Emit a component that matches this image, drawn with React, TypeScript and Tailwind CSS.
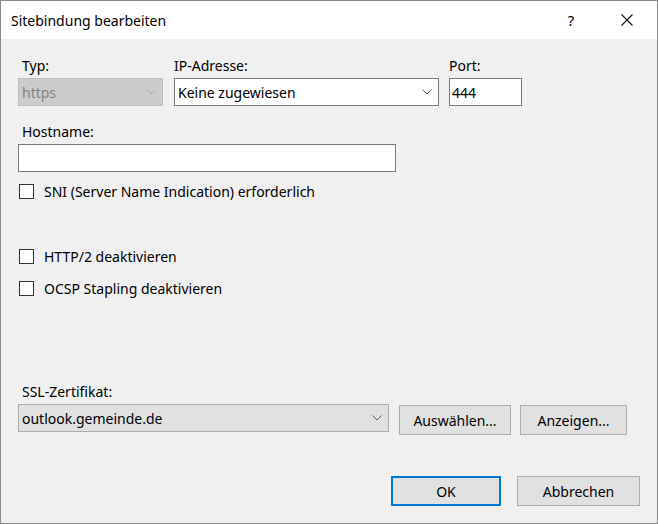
import React from "react";

const Chevron: React.FC<{ color?: string }> = ({ color = "#606060" }) => (
  <svg width="10" height="6" viewBox="0 0 10 6" fill="none">
    <path d="M0.5 0.5 L5 5 L9.5 0.5" stroke={color} strokeWidth="1" />
  </svg>
);

const Check: React.FC<{ label: string }> = ({ label }) => (
  <div className="flex items-center gap-[10px] pl-[1px]">
    <div className="w-[15px] h-[15px] border border-[#333333] bg-white" />
    <span>{label}</span>
  </div>
);

const App: React.FC = () => {
  return (
    <div
      className="w-[658px] h-[524px] flex flex-col bg-[#f0f0f0] border border-[#8a8a8a] text-[14px] text-black overflow-hidden"
      style={{ fontFamily: "'Noto Sans', 'Open Sans', sans-serif" }}
    >
      {/* Title bar */}
      <div className="h-[38px] shrink-0 bg-white flex items-center pl-[10px]">
        <span className="text-[14px] flex-1">Sitebindung bearbeiten</span>
        <span className="w-[20px] text-center text-[15px] mr-[40px]">?</span>
        <svg width="12" height="12" viewBox="0 0 12 12" className="mr-[24px]">
          <path d="M0.5 0.5 L11.5 11.5 M11.5 0.5 L0.5 11.5" stroke="#111" strokeWidth="1.1" />
        </svg>
      </div>

      {/* Body */}
      <div className="flex-1 flex flex-col pl-[17px] pt-[17px]">
        {/* Typ / IP / Port */}
        <div className="flex">
          <div className="flex flex-col w-[145px]">
            <span className="pl-[4px] leading-[20px] mb-[2px]">Typ:</span>
            <div className="h-[28px] bg-[#cccccc] border border-[#bfbfbf] flex items-center justify-between pl-[3px] pr-[6px] text-[#838383]">
              <span>https</span>
              <Chevron color="#b0b0b0" />
            </div>
          </div>
          <div className="flex flex-col w-[265px] ml-[11px]">
            <span className="leading-[20px] mb-[2px]">IP-Adresse:</span>
            <div className="h-[28px] bg-white border border-[#7a7a7a] flex items-center justify-between pl-[3px] pr-[6px]">
              <span>Keine zugewiesen</span>
              <Chevron />
            </div>
          </div>
          <div className="flex flex-col w-[73px] ml-[10px]">
            <span className="leading-[20px] mb-[2px]">Port:</span>
            <div className="h-[28px] bg-white border border-[#7a7a7a] flex items-center pl-[2px]">
              <span>444</span>
            </div>
          </div>
        </div>

        {/* Hostname */}
        <span className="pl-[4px] leading-[20px] mt-[16px] mb-[2px]">Hostname:</span>
        <div className="h-[28px] w-[378px] bg-white border border-[#7a7a7a]" />

        <div className="mt-[9px]">
          <Check label="SNI (Server Name Indication) erforderlich" />
        </div>
        <div className="mt-[44px]">
          <Check label="HTTP/2 deaktivieren" />
        </div>
        <div className="mt-[11px]">
          <Check label="OCSP Stapling deaktivieren" />
        </div>

        {/* SSL */}
        <span className="pl-[4px] leading-[20px] mt-[83px] mb-[2px]">SSL-Zertifikat:</span>
        <div className="flex items-start">
          <div className="h-[28px] w-[371px] bg-[#e1e1e1] border border-[#adadad] flex items-center justify-between pl-[3px] pr-[6px]">
            <span>outlook.gemeinde.de</span>
            <Chevron />
          </div>
          <button className="ml-[10px] mt-[1px] h-[30px] w-[112px] bg-[#e1e1e1] border border-[#adadad]">
            Auswählen...
          </button>
          <button className="ml-[9px] mt-[1px] h-[30px] w-[107px] bg-[#e1e1e1] border border-[#adadad]">
            Anzeigen...
          </button>
        </div>

        {/* OK / Abbrechen */}
        <div className="flex justify-end mt-[41px] pr-[17px]">
          <button className="h-[30px] w-[110px] bg-[#e1e1e1] border-2 border-[#0078d7]">OK</button>
          <button className="ml-[16px] h-[30px] w-[123px] bg-[#e1e1e1] border border-[#adadad]">
            Abbrechen
          </button>
        </div>
      </div>
    </div>
  );
};

export default App;
